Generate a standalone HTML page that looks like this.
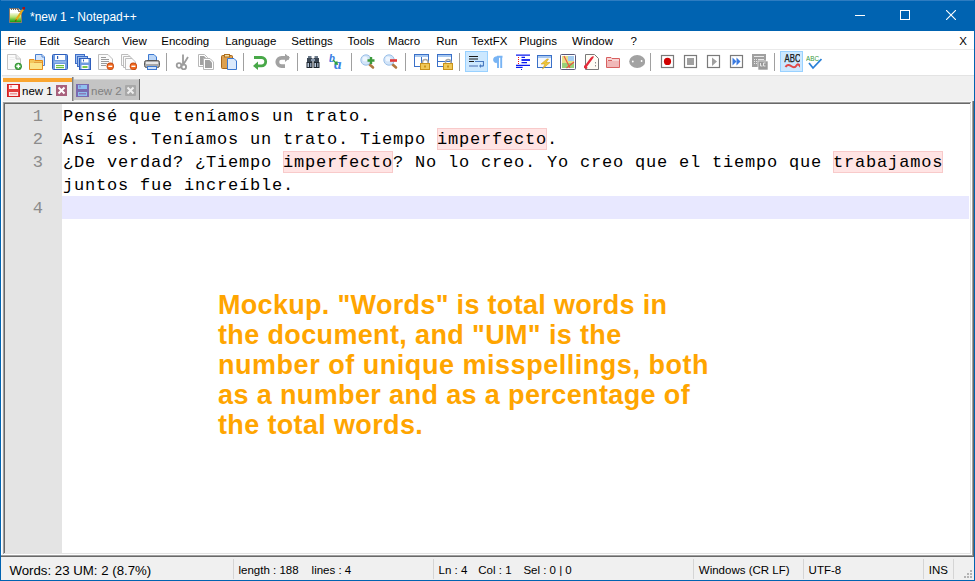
<!DOCTYPE html>
<html><head><meta charset="utf-8">
<style>
*{margin:0;padding:0;box-sizing:border-box}
html,body{width:975px;height:581px;overflow:hidden;background:#F0F0F0;font-family:"Liberation Sans",sans-serif}
.a{position:absolute}
#title{left:0;top:0;width:975px;height:31px;background:#0063B1;border-top:1px solid #2D7CC1}
#title .t{left:30px;top:9px;color:#fff;font-size:12px}
#bl{left:0;top:0;width:1px;height:581px;background:#0063B1}
#br{left:974px;top:0;width:1px;height:581px;background:#0063B1}
#bb{left:0;top:580px;width:975px;height:1px;background:#0063B1}
#menu{left:1px;top:31px;width:973px;height:18px;background:#fff}
#menu span{position:absolute;top:4px;font-size:11.5px;color:#000}
#mline{left:1px;top:49px;width:973px;height:1px;background:#EAEAEA}
#tool{left:1px;top:50px;width:973px;height:25px;background:#fff}
#tline{left:1px;top:75px;width:973px;height:1px;background:#E3E3E3}
.sep{position:absolute;top:53px;width:1px;height:18px;background:#A0A0A0}
.ic{position:absolute;top:54px;width:16px;height:16px}
.pressed{position:absolute;top:51px;height:21px;background:#CCE8FF;border:1px solid #99D1FF}
#editor{left:3px;top:101px;width:971px;height:456px}
#gutter{left:5px;top:104px;width:57px;height:449px;background:#E4E4E4}
#text{left:62px;top:104px;width:908px;height:449px;background:#fff}
.ln{position:absolute;left:5px;width:38px;text-align:right;font-family:"Liberation Mono",monospace;font-size:17px;color:#8C8C8C;line-height:23px}
.tx{position:absolute;left:63px;font-family:"Liberation Mono",monospace;font-size:17px;letter-spacing:0.8px;color:#000;line-height:23px;white-space:pre}
.hl{position:absolute;height:22px;background:#FFE4E4;border:1px solid #F8CACA}
#cur{left:62px;top:196px;width:907px;height:23px;background:#E8E8FF}
#note{left:218px;top:290px;font-weight:bold;font-size:27px;line-height:30px;color:#FFA500;white-space:pre}
#status{left:1px;top:557px;width:973px;height:23px;background:#F0F0F0}
#status span{position:absolute;top:7px;font-size:11.5px;color:#000;white-space:pre}
.ssep{position:absolute;top:559px;width:1px;height:20px;background:#D5D5D5}
</style></head><body>
<div id="title" class="a"><div class="t a">*new 1 - Notepad++</div></div>
<svg class="a" style="left:9px;top:7px" width="16" height="16" viewBox="0 0 16 16">
<defs><linearGradient id="gg" x1="0" y1="0" x2="0" y2="1"><stop offset="0" stop-color="#f4f8e0"/><stop offset="0.45" stop-color="#b8e070"/><stop offset="1" stop-color="#10a010"/></linearGradient></defs>
<path d="M0.5 1.5H9.5L12.5 4.5V15.5H0.5Z" fill="#fff" stroke="#8a7a6a"/>
<path d="M9.5 1.5V4.5H12.5" fill="#ddd" stroke="#8a7a6a"/>
<rect x="1" y="6" width="11" height="9" fill="url(#gg)"/>
<rect x="2" y="1" width="1" height="2" fill="#666"/><rect x="4" y="1" width="1" height="2" fill="#666"/><rect x="6" y="1" width="1" height="2" fill="#666"/><rect x="8" y="1" width="1" height="2" fill="#666"/>
<path d="M7 13 L14 2.5" stroke="#e8a818" stroke-width="2.2"/>
<path d="M6.2 14.5 L7.5 12.5" stroke="#6a4a10" stroke-width="1.3"/>
<rect x="13.5" y="0" width="2.5" height="2.5" fill="#b01010"/>
</svg>
<div class="a" style="left:855px;top:15px;width:10px;height:1px;background:#fff"></div>
<svg class="a" style="left:900px;top:10px" width="10" height="10"><rect x="0.5" y="0.5" width="9" height="9" fill="none" stroke="#fff" stroke-width="1"/></svg>
<svg class="a" style="left:946px;top:10px" width="10" height="10"><path d="M0 0L10 10M10 0L0 10" stroke="#fff" stroke-width="1.1"/></svg>

<div id="menu" class="a">
<span style="left:6.6px">File</span><span style="left:38.6px">Edit</span><span style="left:72.5px">Search</span><span style="left:121.1px">View</span><span style="left:160.3px">Encoding</span><span style="left:224.2px">Language</span><span style="left:290.3px">Settings</span><span style="left:346.5px">Tools</span><span style="left:387.1px">Macro</span><span style="left:435.2px">Run</span><span style="left:470.6px">TextFX</span><span style="left:518.2px">Plugins</span><span style="left:571.1px">Window</span><span style="left:629.5px">?</span><span style="left:958.3px">X</span>
</div>
<div id="mline" class="a"></div>
<div id="tool" class="a"></div>
<div id="tline" class="a"></div>
<div class="sep" style="left:166px"></div><div class="sep" style="left:243px"></div><div class="sep" style="left:297px"></div><div class="sep" style="left:351px"></div><div class="sep" style="left:405px"></div><div class="sep" style="left:459px"></div><div class="sep" style="left:650px"></div><div class="sep" style="left:774px"></div>
<div class="a" style="left:2px;top:77px;width:1px;height:24px;background:#fff"></div>
<div class="a" style="left:3px;top:78px;width:69px;height:4px;background:#FAA530"></div>
<div class="a" style="left:72px;top:77px;width:1px;height:24px;background:#808080"></div>
<div class="a" style="left:73px;top:77px;width:1px;height:24px;background:#B0B0B0"></div>
<div class="a" style="left:74px;top:79px;width:65px;height:21px;background:#C4C4C4"></div>
<div class="a" style="left:74px;top:79px;width:65px;height:1px;background:#D4D4D4"></div>
<div class="a" style="left:139px;top:79px;width:1px;height:21px;background:#6A6A6A"></div>
<svg class="a" style="left:7px;top:84px" width="13" height="13" viewBox="0 0 13 13">
<rect x="0" y="0" width="13" height="13" rx="0.5" fill="#E23C3C"/>
<rect x="0.5" y="0.5" width="12" height="12" fill="none" stroke="#D42020" stroke-width="1"/>
<rect x="2" y="1" width="9" height="4" fill="#FFF4F4"/>
<rect x="3.5" y="1.5" width="1" height="2" fill="#E23C3C"/>
<rect x="2" y="8" width="9" height="4" fill="#FBE8E8"/>
<rect x="3" y="9" width="7" height="1.5" fill="#EC9A9A"/>
</svg>
<div class="a" style="left:22px;top:85px;font-size:11.5px;color:#000">new 1</div>
<svg class="a" style="left:56px;top:85px" width="11" height="11" viewBox="0 0 11 11">
<rect x="0" y="0" width="11" height="11" fill="#A8607C"/>
<path d="M2.5 2.5L8.5 8.5M8.5 2.5L2.5 8.5" stroke="#fff" stroke-width="2"/>
</svg>
<svg class="a" style="left:76px;top:84px" width="13" height="13" viewBox="0 0 13 13">
<rect x="0" y="0" width="13" height="13" fill="#7A6AB0"/>
<rect x="2" y="1" width="9" height="4" fill="#8EC0F0"/>
<rect x="3.5" y="1.5" width="1" height="2" fill="#7A6AB0"/>
<rect x="2" y="8" width="9" height="4" fill="#8EC0F0"/>
<rect x="3" y="9" width="7" height="1.5" fill="#8A7AB8"/>
</svg>
<div class="a" style="left:91px;top:85px;font-size:11.5px;color:#808080">new 2</div>
<svg class="a" style="left:125px;top:85px" width="11" height="11" viewBox="0 0 11 11">
<rect x="0" y="0" width="11" height="11" rx="1" fill="#A8A8A8"/>
<path d="M2.5 2.5L8.5 8.5M8.5 2.5L2.5 8.5" stroke="#eee" stroke-width="2"/>
</svg>
<div class="pressed" style="left:465px;width:23px"></div>
<div class="pressed" style="left:780px;width:23px"></div>
<!--ICONS-->
<svg class="a" style="left:6px;top:54px" width="16" height="16" viewBox="0 0 16 16"><path d="M1.5 0.5H10L14.5 5V15.5H1.5Z" fill="#FBFBFB" stroke="#C4C4C4"/>
<path d="M10 0.5V5H14.5" fill="#EDEDED" stroke="#C4C4C4"/>
<path d="M3.5 3.5h5M3.5 5.5h5" stroke="#EDEDED"/>
<circle cx="12.3" cy="12.3" r="3.6" fill="#2E8E2E"/><circle cx="12.3" cy="12.3" r="2.7" fill="#4CAE4C"/>
<path d="M12.3 10.3v4M10.3 12.3h4" stroke="#fff" stroke-width="1.4"/></svg>
<svg class="a" style="left:29px;top:54px" width="16" height="16" viewBox="0 0 16 16"><path d="M6.5 0.5H13L15.5 3V11.5H6.5Z" fill="#D4E4FA" stroke="#4A80D0"/>
<path d="M13 0.5V3H15.5" fill="#fff" stroke="#4A80D0"/>
<path d="M0.5 5.5H5L6 6.5H13.5V15.5H0.5Z" fill="#F3C65A" stroke="#E48C1C"/>
<path d="M1 9H13V15H1Z" fill="#FBE48A"/>
<path d="M5 8.5H13" stroke="#E4A040"/></svg>
<svg class="a" style="left:52px;top:54px" width="16" height="16" viewBox="0 0 16 16"><rect x="0.5" y="0.5" width="15" height="15" rx="1" fill="#6E9BE0" stroke="#2E5EBC"/>
<rect x="3" y="1" width="10" height="5" fill="#FFFFFF"/>
<rect x="5" y="2" width="1.2" height="3" fill="#2E5EBC"/>
<rect x="2" y="7" width="12" height="2" fill="#8FB4EA"/>
<rect x="3" y="10" width="10" height="5" fill="#FFFFFF"/>
<rect x="4" y="11" width="8" height="1.2" fill="#6CC040"/><rect x="4" y="13" width="8" height="1.2" fill="#6CC040"/></svg>
<svg class="a" style="left:75px;top:54px" width="16" height="16" viewBox="0 0 16 16"><rect x="0.5" y="0.5" width="9" height="9" fill="#9FC0F0" stroke="#3E6EC8"/>
<rect x="2.5" y="2.5" width="10" height="10" fill="#9FC0F0" stroke="#3E6EC8"/>
<rect x="4.5" y="4.5" width="11" height="11" fill="#6E9BE0" stroke="#2E5EBC"/>
<rect x="6.5" y="5" width="7" height="3.5" fill="#fff"/><rect x="8" y="5.5" width="1" height="2" fill="#2E5EBC"/>
<rect x="6.5" y="11" width="7" height="4" fill="#fff"/><rect x="7.5" y="12" width="5" height="2" fill="#7CC84A"/></svg>
<svg class="a" style="left:98px;top:54px" width="16" height="16" viewBox="0 0 16 16"><path d="M0.5 0.5H10L14.5 5V15.5H0.5Z" fill="#FBFBFB" stroke="#BDBDBD"/>
<path d="M3 3.5h5M3 5.5h8M3 7.5h8M3 9.5h6M3 11.5h5" stroke="#9A9A9A"/>
<circle cx="12.3" cy="12.3" r="3.7" fill="#C84A10"/><circle cx="12.3" cy="12.3" r="2.9" fill="#F06A20"/>
<path d="M10.3 12.3h4" stroke="#fff" stroke-width="1.4"/></svg>
<svg class="a" style="left:121px;top:54px" width="16" height="16" viewBox="0 0 16 16"><path d="M0.5 0.5H7L9.5 3V11.5H0.5Z" fill="#FBFBFB" stroke="#BDBDBD"/>
<path d="M2.5 2.5H9L11.5 5V13.5H2.5Z" fill="#FBFBFB" stroke="#BDBDBD"/>
<path d="M4.5 4.5H11L14.5 8V15.5H4.5Z" fill="#FBFBFB" stroke="#BDBDBD"/>
<circle cx="12.4" cy="12.3" r="3.7" fill="#C84A10"/><circle cx="12.4" cy="12.3" r="2.9" fill="#F06A20"/>
<path d="M10.4 12.3h4" stroke="#fff" stroke-width="1.4"/></svg>
<svg class="a" style="left:144px;top:54px" width="16" height="16" viewBox="0 0 16 16"><path d="M4.5 0.5H10L12.5 3V8.5H4.5Z" fill="#BCD6F6" stroke="#3C78D0"/>
<rect x="0.5" y="6.5" width="15" height="7" rx="2" fill="#A8A8A8" stroke="#585858"/>
<rect x="2" y="8" width="12" height="2" fill="#E8E8E8"/>
<rect x="3.5" y="12.5" width="9" height="3" fill="#CFE2FA" stroke="#3C78D0"/></svg>
<svg class="a" style="left:175px;top:54px" width="16" height="16" viewBox="0 0 16 16"><path d="M8 0.5V10M13 3L8 11" stroke="#9C9C9C" stroke-width="1.8"/>
<circle cx="4" cy="11.5" r="2.3" fill="none" stroke="#9C9C9C" stroke-width="1.8"/>
<circle cx="8.8" cy="13" r="2.3" fill="none" stroke="#9C9C9C" stroke-width="1.8"/></svg>
<svg class="a" style="left:198px;top:54px" width="16" height="16" viewBox="0 0 16 16"><path d="M0.5 0.5H6.5L9.5 3.5V12.5H0.5Z" fill="#fff" stroke="#B8B8B8"/>
<path d="M2 2H6L8 4V11H2Z" fill="#A2A2A2"/>
<path d="M5.5 4.5H12L15.5 8V15.5H5.5Z" fill="#fff" stroke="#B8B8B8"/>
<path d="M7 6H11.5L14 8.5V14H7Z" fill="#A2A2A2"/></svg>
<svg class="a" style="left:221px;top:54px" width="16" height="16" viewBox="0 0 16 16"><rect x="0.5" y="1.5" width="11" height="13" rx="1" fill="#DDA050" stroke="#A8661A"/>
<rect x="3.5" y="0.5" width="5" height="2.5" fill="#F8E0A0" stroke="#B07020"/>
<path d="M6.5 4.5H13L15.5 7V15.5H6.5Z" fill="#DCEAFC" stroke="#3C78D0"/></svg>
<svg class="a" style="left:252px;top:54px" width="16" height="16" viewBox="0 0 16 16"><path d="M2 3.5H9.5A4.2 4.2 0 0 1 9.5 11.9H5" fill="none" stroke="#48A848" stroke-width="2.8"/>
<path d="M1 11.9L6 7.6V15.9Z" fill="#48A848"/></svg>
<svg class="a" style="left:275px;top:54px" width="16" height="16" viewBox="0 0 16 16"><path d="M14 3.8H6.5A4.2 4.2 0 0 0 6.5 12.2H10" fill="none" stroke="#A2A2A2" stroke-width="3.8"/>
<path d="M15 3.8L10 -0.4V8Z" fill="#A2A2A2"/></svg>
<svg class="a" style="left:306px;top:54px" width="16" height="16" viewBox="0 0 16 16"><rect x="2" y="2" width="3.5" height="3" fill="#6A7888"/><rect x="8.5" y="2" width="3.5" height="3" fill="#6A7888"/>
<rect x="1" y="4" width="5.5" height="4" fill="#3A4654"/><rect x="7.5" y="4" width="5.5" height="4" fill="#3A4654"/>
<rect x="5" y="5" width="4" height="2" fill="#8A9AAE"/>
<rect x="0.5" y="8" width="6" height="6" fill="#1E262E"/><rect x="7.5" y="8" width="6" height="6" fill="#1E262E"/>
<rect x="1.5" y="9" width="1.5" height="4" fill="#B8C8DC"/><rect x="8.5" y="9" width="1.5" height="4" fill="#B8C8DC"/>
<rect x="4" y="9" width="1.5" height="4" fill="#8898AC"/><rect x="11" y="9" width="1.5" height="4" fill="#8898AC"/></svg>
<svg class="a" style="left:329px;top:54px" width="16" height="16" viewBox="0 0 16 16"><text x="0" y="8" font-family="Liberation Serif" font-style="italic" font-weight="bold" font-size="12" fill="#3C80E4">b</text>
<text x="5" y="15.3" font-family="Liberation Serif" font-style="italic" font-weight="bold" font-size="15" fill="#3C80E4">a</text>
<path d="M4 6L7.5 9.5" stroke="#30A040" stroke-width="1.4"/><path d="M9 11L4.8 10.2L8.2 6.8Z" fill="#30A040"/></svg>
<svg class="a" style="left:360px;top:54px" width="16" height="16" viewBox="0 0 16 16"><path d="M8.5 9.5L13 13.5" stroke="#B07840" stroke-width="2.6" stroke-linecap="round"/>
<circle cx="6" cy="6" r="5.2" fill="#D2E4F8" stroke="#9CC0E8"/>
<circle cx="5" cy="5" r="2.5" fill="#EEF6FF"/>
<path d="M11 3V10M7.5 6.5H14.5" stroke="#3C9A3C" stroke-width="2.4"/></svg>
<svg class="a" style="left:383px;top:54px" width="16" height="16" viewBox="0 0 16 16"><path d="M8.5 9.5L13 13.5" stroke="#B07840" stroke-width="2.6" stroke-linecap="round"/>
<circle cx="6" cy="6" r="5.2" fill="#D2E4F8" stroke="#9CC0E8"/>
<circle cx="5" cy="5" r="2.5" fill="#EEF6FF"/>
<rect x="7" y="5.2" width="7" height="2.6" fill="#E23A3A"/></svg>
<svg class="a" style="left:414px;top:54px" width="16" height="16" viewBox="0 0 16 16"><rect x="0.5" y="0.5" width="14" height="12" fill="#fff" stroke="#3A70C8"/><rect x="1" y="1" width="13" height="2" fill="#A8C8F0"/><path d="M7.5 3V12.5" stroke="#3A70C8"/><path d="M8.5 10V7.8A2.8 2.8 0 0 1 14 7.8V10" fill="none" stroke="#A8A8A8" stroke-width="1.6"/>
<rect x="6.5" y="9.5" width="9" height="6" fill="#F0C858" stroke="#C8921C"/>
<rect x="10" y="11.5" width="2" height="2" fill="#C8921C"/></svg>
<svg class="a" style="left:437px;top:54px" width="16" height="16" viewBox="0 0 16 16"><rect x="0.5" y="0.5" width="14" height="12" fill="#fff" stroke="#3A70C8"/><rect x="1" y="1" width="13" height="2" fill="#A8C8F0"/><path d="M1 7.5H14" stroke="#3A70C8"/><path d="M8.5 10V7.8A2.8 2.8 0 0 1 14 7.8V10" fill="none" stroke="#A8A8A8" stroke-width="1.6"/>
<rect x="6.5" y="9.5" width="9" height="6" fill="#F0C858" stroke="#C8921C"/>
<rect x="10" y="11.5" width="2" height="2" fill="#C8921C"/></svg>
<svg class="a" style="left:468px;top:54px" width="16" height="16" viewBox="0 0 16 16"><path d="M1 2.5H10M1 5H10M1 7.5H6" stroke="#1A1A1A" stroke-width="1.2"/>
<path d="M7 7.5H15.5V12" fill="none" stroke="#4A7AC0" stroke-width="1.2"/>
<path d="M15.5 12H12" stroke="#4A7AC0" stroke-width="1.4"/><path d="M11 12L13 10V14Z" fill="#4A7AC0"/>
<rect x="1" y="11" width="9" height="2" fill="#8AAAD8"/></svg>
<svg class="a" style="left:491px;top:54px" width="16" height="16" viewBox="0 0 16 16"><path d="M8 2.8H5.5A2.9 2.9 0 0 0 5.5 8.6H7" fill="#78B4F4" stroke="#78B4F4" stroke-width="1"/>
<path d="M7 2.8V14M10.2 2.8V14M6 2.8H11.5" stroke="#78B4F4" stroke-width="1.9"/></svg>
<svg class="a" style="left:515px;top:54px" width="16" height="16" viewBox="0 0 16 16"><path d="M1 1.1H15M6.5 3.4H10M6.5 8.6H12M1 11.4H15M1 13.4H7.6" stroke="#0A1AF0" stroke-width="1.1"/>
<path d="M6.5 6H15" stroke="#0A1AF0" stroke-width="1.8"/>
<path d="M3.5 3V10" stroke="#F01010" stroke-dasharray="1 1"/>
<rect x="6" y="15" width="1" height="1" fill="#0A1AF0"/></svg>
<svg class="a" style="left:537px;top:54px" width="16" height="16" viewBox="0 0 16 16"><rect x="0.5" y="1.5" width="14" height="12" fill="#F4F8FF" stroke="#3A70C8"/><rect x="1" y="2" width="13" height="2" fill="#A8C8F0"/>
<path d="M10 5L4 10H8L5.5 15L13 8.5H9L11.5 5Z" fill="#F0C838" stroke="#D0A020" stroke-width="0.6"/></svg>
<svg class="a" style="left:560px;top:54px" width="16" height="16" viewBox="0 0 16 16"><rect x="0.5" y="0.5" width="15" height="15" rx="1" fill="#fff" stroke="#5A5A7A"/>
<rect x="2" y="2" width="12" height="12" fill="#E6E088"/>
<rect x="8" y="2" width="6" height="5" fill="#A4CCF0"/>
<rect x="2" y="9" width="12" height="5" fill="#98D078"/>
<path d="M4 2L10 14M14 8L6.5 14" stroke="#EE5040" stroke-width="1.1"/></svg>
<svg class="a" style="left:584px;top:54px" width="16" height="16" viewBox="0 0 16 16"><path d="M1.5 0.5H10.5L14.5 4.5V15.5H1.5Z" fill="#FFFDF6" stroke="#7A7A7A"/>
<path d="M0.5 14L7.5 4.5Q8.5 3 9.5 3.5" fill="none" stroke="#E42A3A" stroke-width="2.2"/>
<path d="M0 12L3 14.5" stroke="#E42A3A" stroke-width="2"/>
<path d="M11.5 8v1.5M11.5 11v1.5" stroke="#909090"/></svg>
<svg class="a" style="left:606px;top:54px" width="16" height="16" viewBox="0 0 16 16"><path d="M0.5 3.5H5L6 4.5H13.5V13.5H0.5Z" fill="#F6D4D4" stroke="#D86060"/>
<path d="M1 7H13V13H1Z" fill="#F0B8B8"/><path d="M2 6.5H6" stroke="#D86060"/></svg>
<svg class="a" style="left:629px;top:54px" width="16" height="16" viewBox="0 0 16 16"><ellipse cx="8.2" cy="7.5" rx="8" ry="6.5" fill="#A2A2A2"/>
<circle cx="3.8" cy="7.5" r="0.9" fill="#fff"/><circle cx="12.6" cy="7" r="0.9" fill="#fff"/></svg>
<svg class="a" style="left:659px;top:54px" width="16" height="16" viewBox="0 0 16 16"><rect x="2.5" y="1.5" width="12" height="12" fill="#fff" stroke="#7A7A7A" stroke-width="1.2"/><circle cx="8.5" cy="7.4" r="3.6" fill="#D00000"/></svg>
<svg class="a" style="left:682px;top:54px" width="16" height="16" viewBox="0 0 16 16"><rect x="2.5" y="1.5" width="12" height="12" fill="#fff" stroke="#7A7A7A" stroke-width="1.2"/><rect x="5" y="4" width="7" height="7" fill="#A0A0A0"/></svg>
<svg class="a" style="left:705px;top:54px" width="16" height="16" viewBox="0 0 16 16"><rect x="2.5" y="1.5" width="12" height="12" fill="#fff" stroke="#7A7A7A" stroke-width="1.2"/><path d="M7 3.5L12 7.5L7 12Z" fill="#A0A0A0"/></svg>
<svg class="a" style="left:728px;top:54px" width="16" height="16" viewBox="0 0 16 16"><rect x="2.5" y="1.5" width="12" height="12" fill="#fff" stroke="#7A7A7A" stroke-width="1.2"/><path d="M4.5 3.5L8.5 7.5L4.5 11.5Z" fill="#3A7AE0"/><path d="M8.5 3.5L12.5 7.5L8.5 11.5Z" fill="#3A7AE0"/></svg>
<svg class="a" style="left:752px;top:54px" width="16" height="16" viewBox="0 0 16 16"><rect x="0" y="0" width="14" height="13" fill="#A0A0A0"/>
<rect x="2" y="2" width="10" height="1" fill="#E8E8E8"/>
<rect x="2" y="5" width="1" height="1" fill="#E8E8E8"/><rect x="2" y="7" width="1" height="1" fill="#E8E8E8"/><rect x="2" y="9" width="1" height="1" fill="#E8E8E8"/>
<rect x="4" y="5" width="1" height="1" fill="#E8E8E8"/><rect x="4" y="7" width="1" height="1" fill="#E8E8E8"/><rect x="4" y="9" width="1" height="1" fill="#E8E8E8"/>
<rect x="6" y="5" width="6" height="1" fill="#E8E8E8"/>
<rect x="6" y="7" width="10" height="9" fill="#9A9A9A" stroke="#fff" stroke-width="0.6"/>
<path d="M8.5 9V12H10.5M13.5 9H11.5V12H13.5" fill="none" stroke="#E8E8E8" stroke-width="1"/></svg>
<svg class="a" style="left:784px;top:54px" width="16" height="16" viewBox="0 0 16 16"><text x="8.5" y="8.2" text-anchor="middle" font-family="Liberation Sans" font-size="10.5" textLength="16" lengthAdjust="spacingAndGlyphs" fill="#1A1A1A" stroke="#1A1A1A" stroke-width="0.3">ABC</text>
<path d="M1.5 13C3 10.5 5 10.5 7 12S11 14 12.5 11.5 15.5 11 16.5 13" fill="none" stroke="#E04848" stroke-width="2"/></svg>
<svg class="a" style="left:806px;top:54px" width="16" height="16" viewBox="0 0 16 16"><text x="6.5" y="6.5" text-anchor="middle" font-family="Liberation Sans" font-size="7" textLength="13" lengthAdjust="spacingAndGlyphs" fill="#3A9A3A">ABC</text>
<path d="M3 9L7 14L15.5 5" fill="none" stroke="#2A80D8" stroke-width="1.8"/></svg>
<!--/ICONS-->

<div class="a" style="left:1px;top:101px;width:972px;height:1px;background:#F8F8F8"></div>
<div class="a" style="left:1px;top:75px;width:1px;height:481px;background:#fff"></div>
<div class="a" style="left:972px;top:101px;width:1px;height:455px;background:#A0A0A0"></div>
<div class="a" style="left:973px;top:101px;width:1px;height:456px;background:#696969"></div>
<div class="a" style="left:1px;top:555px;width:972px;height:1px;background:#A0A0A0"></div>
<div class="a" style="left:1px;top:556px;width:973px;height:1px;background:#696969"></div>
<div class="a" style="left:3px;top:102px;width:968px;height:1px;background:#A0A0A0"></div>
<div class="a" style="left:3px;top:102px;width:1px;height:452px;background:#A0A0A0"></div>
<div class="a" style="left:4px;top:103px;width:966px;height:1px;background:#696969"></div>
<div class="a" style="left:4px;top:103px;width:1px;height:450px;background:#696969"></div>
<div class="a" style="left:4px;top:553px;width:967px;height:1px;background:#E3E3E3"></div>
<div class="a" style="left:970px;top:103px;width:1px;height:451px;background:#E3E3E3"></div>
<div class="a" style="left:3px;top:554px;width:969px;height:1px;background:#fff"></div>
<div class="a" style="left:971px;top:102px;width:1px;height:453px;background:#fff"></div>
<div id="gutter" class="a"></div>
<div id="text" class="a"></div>
<div id="cur" class="a"></div>
<div class="hl" style="left:437px;top:128px;width:110px"></div>
<div class="hl" style="left:283px;top:151px;width:110px"></div>
<div class="hl" style="left:833px;top:151px;width:110px"></div>
<div class="ln" style="top:105px">1</div>
<div class="ln" style="top:128px">2</div>
<div class="ln" style="top:151px">3</div>
<div class="ln" style="top:197px">4</div>
<div class="tx" style="top:105px">Pensé que teníamos un trato.</div>
<div class="tx" style="top:128px">Así es. Teníamos un trato. Tiempo imperfecto.</div>
<div class="tx" style="top:151px">¿De verdad? ¿Tiempo imperfecto? No lo creo. Yo creo que el tiempo que trabajamos</div>
<div class="tx" style="top:174px">juntos fue increíble.</div>
<div id="note" class="a"><div style="letter-spacing:0.31px">Mockup. "Words" is total words in</div><div style="letter-spacing:0.36px">the document, and "UM" is the</div><div style="letter-spacing:0.53px">number of unique misspellings, both</div><div style="letter-spacing:0.38px">as a number and as a percentage of</div><div style="letter-spacing:0.35px">the total words.</div></div>

<div id="status" class="a">
<span style="left:8.4px;font-size:13.25px;top:6px">Words: 23 UM: 2 (8.7%)</span>
<span style="left:237.5px">length : 188</span><span style="left:310.6px">lines : 4</span>
<span style="left:437.5px">Ln : 4</span><span style="left:477.3px">Col : 1</span><span style="left:522.4px">Sel : 0 | 0</span>
<span style="left:697.8px">Windows (CR LF)</span>
<span style="left:807.6px">UTF-8</span>
<span style="left:927.7px">INS</span>
</div>
<div class="ssep" style="left:233px"></div><div class="ssep" style="left:433px"></div><div class="ssep" style="left:693px"></div><div class="ssep" style="left:803px"></div><div class="ssep" style="left:923px"></div><div class="ssep" style="left:953px"></div>
<div class="a" style="left:970px;top:570px;width:2px;height:2px;background:#B4B4B4"></div>
<div class="a" style="left:967px;top:573px;width:2px;height:2px;background:#B4B4B4"></div><div class="a" style="left:970px;top:573px;width:2px;height:2px;background:#B4B4B4"></div>
<div class="a" style="left:964px;top:576px;width:2px;height:2px;background:#B4B4B4"></div><div class="a" style="left:967px;top:576px;width:2px;height:2px;background:#B4B4B4"></div><div class="a" style="left:970px;top:576px;width:2px;height:2px;background:#B4B4B4"></div>
<div id="bl" class="a"></div><div id="br" class="a"></div><div id="bb" class="a"></div>
</body></html>
